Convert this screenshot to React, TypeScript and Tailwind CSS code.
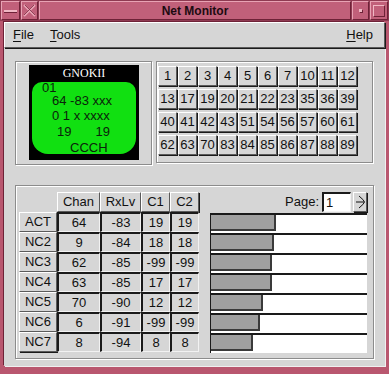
import React from 'react'

const btnRows = [
  [1, 2, 3, 4, 5, 6, 7, 10, 11, 12],
  [13, 17, 19, 20, 21, 22, 23, 35, 36, 39],
  [40, 41, 42, 43, 51, 54, 56, 57, 60, 61],
  [62, 63, 70, 83, 84, 85, 86, 87, 88, 89],
]

const cells: [string, string, string, string, string, number][] = [
  ['ACT', '64', '-83', '19', '19', 65],
  ['NC2', '9', '-84', '18', '18', 63],
  ['NC3', '62', '-85', '-99', '-99', 61],
  ['NC4', '63', '-85', '17', '17', 61],
  ['NC5', '70', '-90', '12', '12', 52],
  ['NC6', '6', '-91', '-99', '-99', 49],
  ['NC7', '8', '-94', '8', '8', 42],
]

const raised =
  'border border-t-white border-l-white border-r-[#5a5a5a] border-b-[#5a5a5a] shadow-[1px_1px_0_#1a1a1a]'
const sunken =
  'border-t-2 border-l-2 border-r border-b border-t-[#1a1a1a] border-l-[#1a1a1a] border-r-[#f2f2f2] border-b-[#f2f2f2]'
const etched =
  'border border-[#8c8c8c] shadow-[inset_1px_1px_0_#fff,1px_1px_0_#fff]'
const tbox =
  'border border-t-[#e8a3b4] border-l-[#e8a3b4] border-r-[#6e2237] border-b-[#6e2237] bg-[#c1607a]'

const TitleBar = () => (
  <div className="flex h-[21px] shrink-0 p-[1px] gap-[1px] bg-[#8f3a52]">
    <div className={`${tbox} w-[19px] flex items-center justify-center`}>
      <div className="w-[13px] h-[2px] bg-[#f0b8c4] shadow-[0_1px_0_#6e2237]" />
    </div>
    <div className={`${tbox} w-[17px] flex items-center justify-center`}>
      <svg width="13" height="13" viewBox="0 0 13 13">
        <path d="M1 1 L12 12 M12 1 L1 12" stroke="#e8a3b4" strokeWidth="2" />
        <path d="M2 1 L12 11 M11 1 L1 11" stroke="#7a2b40" strokeWidth="0.8" />
      </svg>
    </div>
    <div className={`${tbox} flex-1 flex items-center justify-center`}>
      <span className="text-[12px] font-bold text-[#1c0a10] font-['Liberation_Sans',sans-serif] leading-none">
        Net Monitor
      </span>
    </div>
    <div className={`${tbox} w-[17px] flex items-center justify-center`}>
      <div className="w-[3px] h-[3px] bg-[#f0b8c4] shadow-[1px_1px_0_#6e2237]" />
    </div>
    <div className={`${tbox} w-[18px] flex items-center justify-center`}>
      <div className="w-[12px] h-[12px] border border-t-[#f0b8c4] border-l-[#f0b8c4] border-r-[#6e2237] border-b-[#6e2237]" />
    </div>
  </div>
)

const MenuItem = ({ first, rest }: { first: string; rest: string }) => (
  <span className="text-[13px] text-[#111]">
    <span className="underline underline-offset-2">{first}</span>
    {rest}
  </span>
)

const Lcd = () => (
  <div className="w-[110px] h-[95px] bg-black flex flex-col mt-[3px] ml-[13px]">
    <div className="h-[17px] text-center text-white text-[12px] leading-[17px] font-['Liberation_Serif',serif]">
      GNOKII
    </div>
    <div className="mx-[3px] h-[72px] bg-[#11e011] rounded-tl-[10px] rounded-tr-[10px] rounded-b-[16px] text-[13px] leading-[13px] text-[#0b230b] whitespace-pre">
      <div className="-mt-[1px] pl-[10px]">01</div>
      <div className="pl-[20px]">64 -83 xxx</div>
      <div className="mt-[2px] pl-[20px]">0 1 x xxxx</div>
      <div className="mt-[3px] pl-[25px] flex gap-[24px]">
        <span>19</span>
        <span>19</span>
      </div>
      <div className="mt-[3px] pl-[38px]">CCCH</div>
    </div>
  </div>
)

const SpinArrow = () => (
  <svg width="11" height="16" viewBox="0 0 11 16">
    <path d="M1 8 H9" stroke="#111" strokeWidth="1" />
    <path d="M4 2 Q9 6 9.5 8 Q9 10 4 14" stroke="#111" strokeWidth="1" fill="none" />
  </svg>
)

export default function App() {
  return (
    <div className="w-[389px] h-[374px] bg-[#b9576f] flex flex-col font-['Liberation_Sans',sans-serif] overflow-hidden">
      <TitleBar />
      <div className="flex-1 mx-[4px] mt-[1px] mb-[8px] bg-[#d6d6d6] flex flex-col shadow-[1px_1px_0_#f0f0f0,-1px_-1px_0_#6e2237]">
        <div className={`h-[26px] shrink-0 flex items-center pl-[8px] pr-[11px] gap-[16px] ${raised}`}>
          <MenuItem first="F" rest="ile" />
          <MenuItem first="T" rest="ools" />
          <div className="flex-1" />
          <MenuItem first="H" rest="elp" />
        </div>

        <div className="flex pl-[11px] pr-[12px] pt-[13px] gap-[4px]">
          <div className={`w-[137px] h-[104px] ${etched}`}>
            <Lcd />
          </div>
          <div className={`flex-1 h-[102px] ${etched} pl-[1px] pt-[4px]`}>
            <div className="grid grid-cols-[repeat(10,20px)] gap-y-[3px]">
              {btnRows.flat().map((n, i) => (
                <div
                  key={i}
                  className={`h-[20px] w-[19px] flex items-center justify-center text-[13px] text-[#111] ${raised}`}
                >
                  {n}
                </div>
              ))}
            </div>
          </div>
        </div>

        <div className={`mt-[20px] ml-[11px] mr-[11px] h-[174px] ${etched} flex pl-[3px] pt-[6px] gap-[11px]`}>
          <div className="grid grid-cols-[38px_43px_41px_29px_29px] auto-rows-[20px] text-[13px] text-[#111] h-fit">
            <div />
            {['Chan', 'RxLv', 'C1', 'C2'].map((h) => (
              <div key={h} className={`flex items-center justify-center ${raised}`}>
                {h}
              </div>
            ))}
            {cells.map((r) => (
              <React.Fragment key={r[0]}>
                <div className={`flex items-center justify-center ${raised}`}>{r[0]}</div>
                {r.slice(1, 5).map((v, j) => (
                  <div key={j} className={`flex items-center justify-center ${sunken}`}>
                    {v}
                  </div>
                ))}
              </React.Fragment>
            ))}
          </div>

          <div className="w-[157px] flex flex-col">
            <div className="h-[21px] flex items-center justify-end gap-[2px] pb-[1px]">
              <span className="text-[13px] text-[#111] mr-[1px]">Page:</span>
              <div className={`w-[29px] h-[20px] bg-white text-[13px] text-[#111] pl-[2px] leading-[17px] ${sunken}`}>
                1
              </div>
              <div className={`w-[14px] h-[20px] flex items-center justify-center ${raised}`}>
                <SpinArrow />
              </div>
            </div>
            {cells.map((r) => (
              <div
                key={r[0]}
                className="h-[20px] bg-white border-t-2 border-l border-t-[#1a1a1a] border-l-[#1a1a1a] flex items-start"
              >
                <div
                  className="h-[16px] bg-[#a0a0a0] border-r-2 border-b-2 border-r-[#3a3a3a] border-b-[#3a3a3a]"
                  style={{ width: r[5] }}
                />
              </div>
            ))}
          </div>
        </div>
      </div>
    </div>
  )
}
